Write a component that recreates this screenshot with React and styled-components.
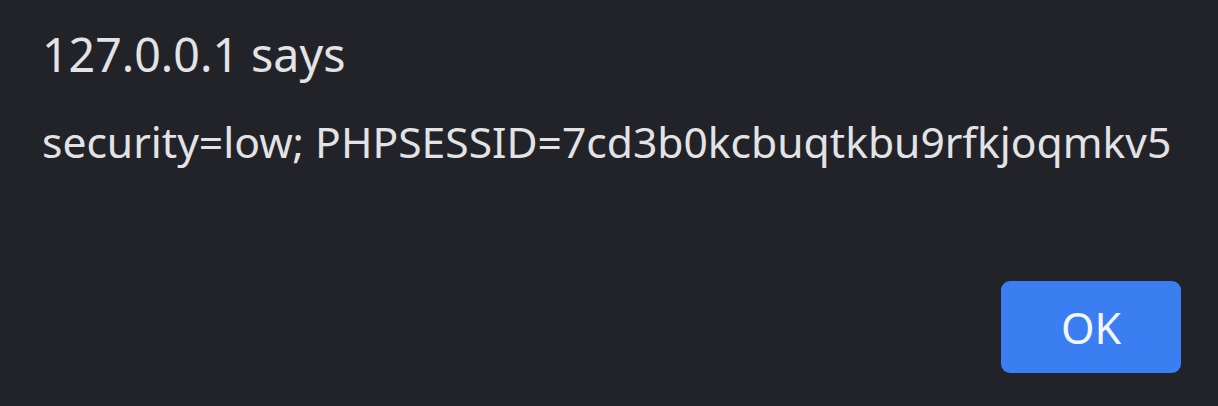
import React from "react";
import styled, { createGlobalStyle } from "styled-components";

const GlobalStyle = createGlobalStyle`
  html, body {
    margin: 0;
    padding: 0;
    background: #212329;
  }
  body {
    font-family: "Noto Sans", "Open Sans", sans-serif;
  }
`;

const Dialog = styled.div`
  width: 1218px;
  height: 406px;
  box-sizing: border-box;
  background: #212329;
  color: #e3e3e6;
  display: flex;
  flex-direction: column;
  padding: 25px 37px 0 42px;
`;

const Title = styled.div`
  font-size: 46.5px;
  line-height: 58px;
  white-space: nowrap;
`;

const Message = styled.div`
  margin-top: 32px;
  font-size: 42.6px;
  line-height: 52px;
  white-space: nowrap;
`;

const Actions = styled.div`
  margin-top: auto;
  margin-bottom: 33px;
  display: flex;
  justify-content: flex-end;
`;

const Button = styled.button`
  width: 180px;
  height: 92px;
  border: none;
  border-radius: 9px;
  background: #3b7ef2;
  color: #f2f6fe;
  font-family: inherit;
  font-size: 43px;
  padding: 0;
  cursor: pointer;
`;

export default function App() {
  return (
    <>
      <GlobalStyle />
      <Dialog>
        <Title>127.0.0.1 says</Title>
        <Message>security=low; PHPSESSID=7cd3b0kcbuqtkbu9rfkjoqmkv5</Message>
        <Actions>
          <Button>OK</Button>
        </Actions>
      </Dialog>
    </>
  );
}
